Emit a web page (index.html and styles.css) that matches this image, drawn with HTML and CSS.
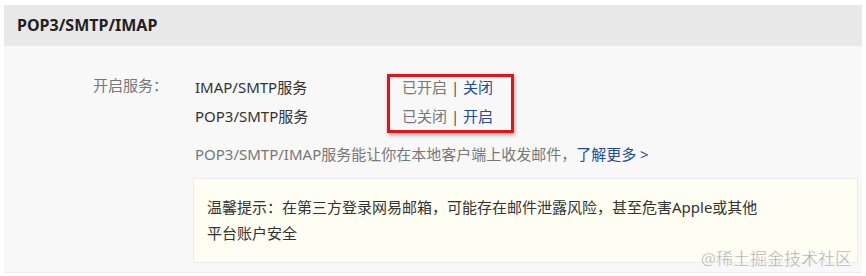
FILE: index.html
```html
<!DOCTYPE html>
<html lang="zh-CN">
  <head>
    <meta charset="UTF-8" />
    <title>POP3/SMTP/IMAP</title>
    <link rel="stylesheet" href="styles.css">
  </head>
  <body>
    <div class="panel">
      <div class="panel-head">POP3/SMTP/IMAP</div>
      <div class="panel-body">
        <div class="row">
          <div class="label">开启服务：</div>
          <div class="content">
            <div class="services">
              <div class="names">
                <div class="line">IMAP/SMTP服务</div>
                <div class="line">POP3/SMTP服务</div>
              </div>
              <div class="status">
                <div class="line">已开启 <span class="sep">|</span> <a href="#" class="link">关闭</a></div>
                <div class="line">已关闭 <span class="sep">|</span> <a href="#" class="link">开启</a></div>
                <div class="highlight"></div>
              </div>
            </div>
            <div class="desc">POP3/SMTP/IMAP服务能让你在本地客户端上收发邮件，<a href="#" class="link">了解更多 &gt;</a></div>
            <div class="tip">温馨提示：在第三方登录网易邮箱，可能存在邮件泄露风险，甚至危害Apple或其他<br>平台账户安全</div>
          </div>
        </div>
      </div>
      <div class="watermark">@稀土掘金技术社区</div>
    </div>
  </body>
</html>
```

FILE: styles.css
```css
body {
  margin: 0;
  padding: 5px 4px 0 4px;
  background-color: #fff;
  font-family: "Noto Sans", "Noto Sans CJK SC", sans-serif;
  font-size: 15px;
  color: #333;
}

.panel {
  position: relative;
  background-color: #f8f8f8;
  border-bottom: 1px solid #ececec;
  height: 267px;
}

.panel-head {
  background-color: #e8e8e8;
  height: 41px;
  line-height: 41px;
  padding-left: 13px;
  font-size: 16px;
  font-weight: bold;
  color: #222;
}

.panel-body {
  padding: 27px 4px 0 0;
}

.row {
  display: flex;
}

.label {
  width: 89px;
  padding-left: 89px;
  color: #777;
  line-height: 29px;
  margin-top: -2px;
}

.content {
  flex: 1;
  padding-left: 13px;
}

.services {
  display: flex;
}

.names {
  width: 207px;
}

.line {
  line-height: 29px;
  height: 29px;
}

.status {
  position: relative;
  color: #777;
}

.sep {
  color: #555;
}

.link {
  color: #1f4b99;
  text-decoration: none;
}

.highlight {
  position: absolute;
  left: -15px;
  top: 1px;
  width: 121px;
  height: 53px;
  border: 3px solid #e0141b;
  box-shadow: 1px 2px 4px rgba(0, 0, 0, 0.35);
}

.desc {
  color: #777;
  margin-top: 13px;
  line-height: 20px;
}

.tip {
  margin-top: 14px;
  margin-left: -2px;
  background-color: #fefef2;
  border: 1px solid #ececec;
  padding: 15px 13px 16px 13px;
  line-height: 26px;
  color: #333;
}

.watermark {
  position: absolute;
  right: 10px;
  bottom: 2px;
  font-size: 17px;
  color: rgba(160, 160, 160, 0.85);
  -webkit-text-stroke: 0.3px #fff;
}
```
